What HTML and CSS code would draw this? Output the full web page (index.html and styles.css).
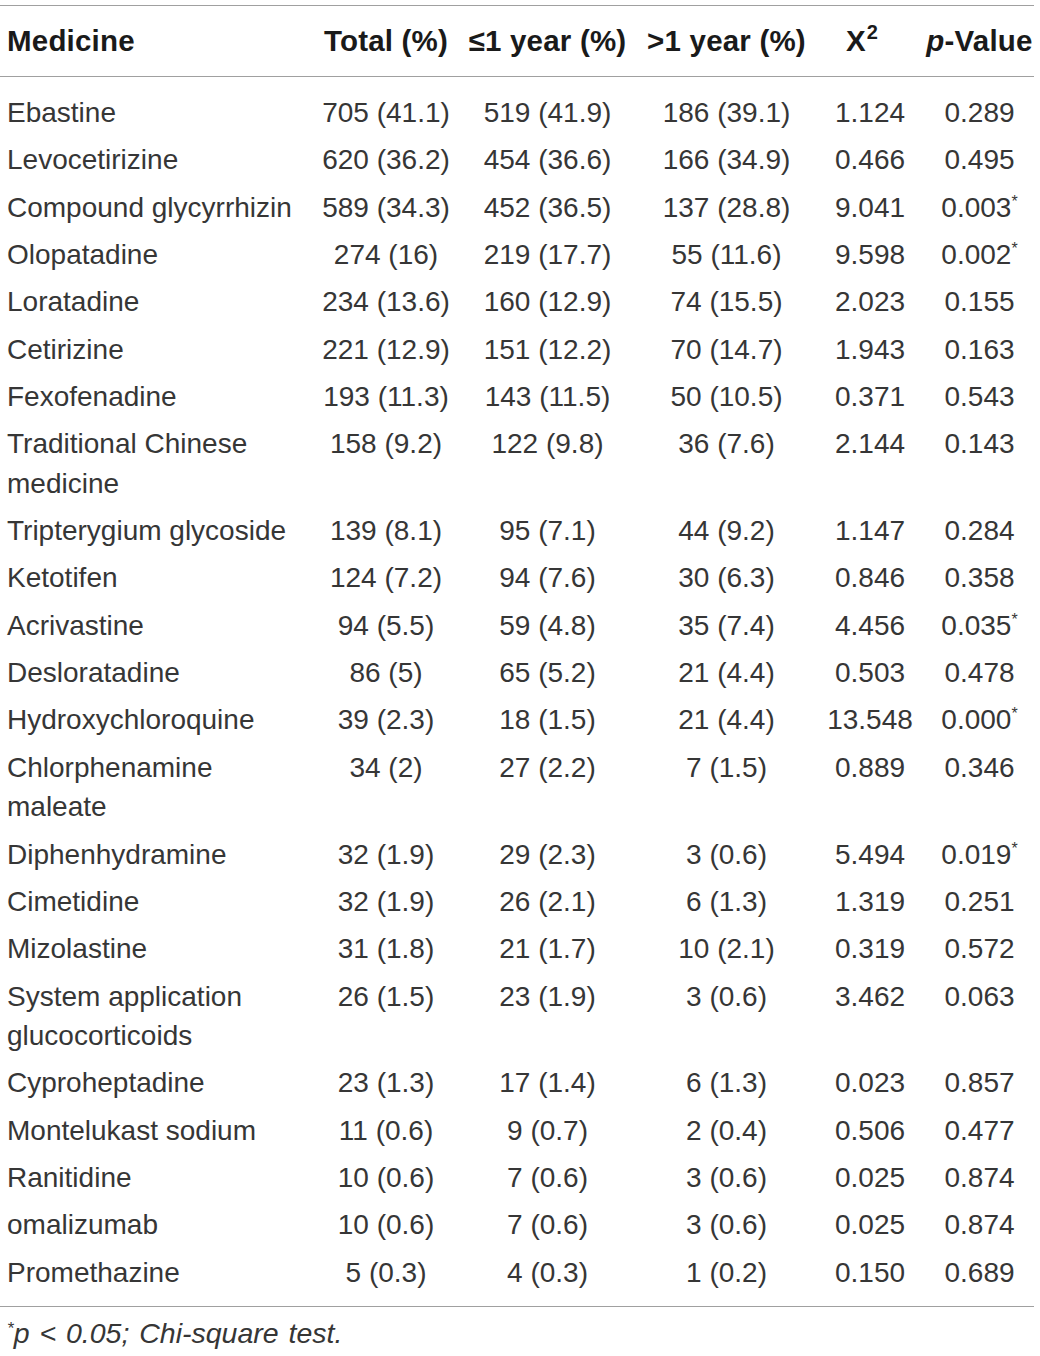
FILE: index.html
```html
<!DOCTYPE html>
<html lang="en">
<head>
<meta charset="utf-8">
<title>Medicine table</title>
<link rel="stylesheet" href="styles.css">
</head>
<body>
<div class="wrap">
<table class="data">
<colgroup>
<col class="c1"><col class="c2"><col class="c3"><col class="c4"><col class="c5"><col class="c6">
</colgroup>
<thead>
<tr><th class="name">Medicine</th><th>Total (%)</th><th>&le;1 year (%)</th><th>&gt;1 year (%)</th><th class="chi">X<sup>2</sup></th><th><i>p</i>-Value</th></tr>
</thead>
<tbody>
<tr class="first"><td class="name">Ebastine</td><td>705 (41.1)</td><td>519 (41.9)</td><td>186 (39.1)</td><td>1.124</td><td>0.289</td></tr>
<tr><td class="name">Levocetirizine</td><td>620 (36.2)</td><td>454 (36.6)</td><td>166 (34.9)</td><td>0.466</td><td>0.495</td></tr>
<tr><td class="name">Compound glycyrrhizin</td><td>589 (34.3)</td><td>452 (36.5)</td><td>137 (28.8)</td><td>9.041</td><td>0.003<sup>*</sup></td></tr>
<tr><td class="name">Olopatadine</td><td>274 (16)</td><td>219 (17.7)</td><td>55 (11.6)</td><td>9.598</td><td>0.002<sup>*</sup></td></tr>
<tr><td class="name">Loratadine</td><td>234 (13.6)</td><td>160 (12.9)</td><td>74 (15.5)</td><td>2.023</td><td>0.155</td></tr>
<tr><td class="name">Cetirizine</td><td>221 (12.9)</td><td>151 (12.2)</td><td>70 (14.7)</td><td>1.943</td><td>0.163</td></tr>
<tr><td class="name">Fexofenadine</td><td>193 (11.3)</td><td>143 (11.5)</td><td>50 (10.5)</td><td>0.371</td><td>0.543</td></tr>
<tr><td class="name">Traditional Chinese<br>medicine</td><td>158 (9.2)</td><td>122 (9.8)</td><td>36 (7.6)</td><td>2.144</td><td>0.143</td></tr>
<tr><td class="name">Tripterygium glycoside</td><td>139 (8.1)</td><td>95 (7.1)</td><td>44 (9.2)</td><td>1.147</td><td>0.284</td></tr>
<tr><td class="name">Ketotifen</td><td>124 (7.2)</td><td>94 (7.6)</td><td>30 (6.3)</td><td>0.846</td><td>0.358</td></tr>
<tr><td class="name">Acrivastine</td><td>94 (5.5)</td><td>59 (4.8)</td><td>35 (7.4)</td><td>4.456</td><td>0.035<sup>*</sup></td></tr>
<tr><td class="name">Desloratadine</td><td>86 (5)</td><td>65 (5.2)</td><td>21 (4.4)</td><td>0.503</td><td>0.478</td></tr>
<tr><td class="name">Hydroxychloroquine</td><td>39 (2.3)</td><td>18 (1.5)</td><td>21 (4.4)</td><td>13.548</td><td>0.000<sup>*</sup></td></tr>
<tr><td class="name">Chlorphenamine<br>maleate</td><td>34 (2)</td><td>27 (2.2)</td><td>7 (1.5)</td><td>0.889</td><td>0.346</td></tr>
<tr><td class="name">Diphenhydramine</td><td>32 (1.9)</td><td>29 (2.3)</td><td>3 (0.6)</td><td>5.494</td><td>0.019<sup>*</sup></td></tr>
<tr><td class="name">Cimetidine</td><td>32 (1.9)</td><td>26 (2.1)</td><td>6 (1.3)</td><td>1.319</td><td>0.251</td></tr>
<tr><td class="name">Mizolastine</td><td>31 (1.8)</td><td>21 (1.7)</td><td>10 (2.1)</td><td>0.319</td><td>0.572</td></tr>
<tr><td class="name">System application<br>glucocorticoids</td><td>26 (1.5)</td><td>23 (1.9)</td><td>3 (0.6)</td><td>3.462</td><td>0.063</td></tr>
<tr><td class="name">Cyproheptadine</td><td>23 (1.3)</td><td>17 (1.4)</td><td>6 (1.3)</td><td>0.023</td><td>0.857</td></tr>
<tr><td class="name">Montelukast sodium</td><td>11 (0.6)</td><td>9 (0.7)</td><td>2 (0.4)</td><td>0.506</td><td>0.477</td></tr>
<tr><td class="name">Ranitidine</td><td>10 (0.6)</td><td>7 (0.6)</td><td>3 (0.6)</td><td>0.025</td><td>0.874</td></tr>
<tr><td class="name">omalizumab</td><td>10 (0.6)</td><td>7 (0.6)</td><td>3 (0.6)</td><td>0.025</td><td>0.874</td></tr>
<tr class="last"><td class="name">Promethazine</td><td>5 (0.3)</td><td>4 (0.3)</td><td>1 (0.2)</td><td>0.150</td><td>0.689</td></tr>
</tbody>
</table>
<p class="note"><sup>*</sup>p &lt; 0.05; Chi-square test.</p>
</div>
</body>
</html>
```
FILE: styles.css
```css
html, body {
  margin: 0;
  padding: 0;
  background: #ffffff;
}
.wrap {
  padding-top: 5px;
  width: 1034px;
  font-family: "Liberation Sans", Arial, sans-serif;
  color: #363636;
}
.data {
  width: 1034px;
  border-collapse: collapse;
  table-layout: fixed;
  border-top: 1px solid #a0a0a0;
  border-bottom: 1px solid #a0a0a0;
}
.c1 { width: 315px; }
.c2 { width: 142px; }
.c3 { width: 181px; }
.c4 { width: 177px; }
.c5 { width: 110px; }
.c6 { width: 109px; }
.data th, .data td {
  padding: 0;
  text-align: center;
  white-space: nowrap;
  vertical-align: top;
}
.data thead th {
  font-size: 29.5px;
  letter-spacing: 0.2px;
  font-weight: bold;
  color: #1a1a1a;
  line-height: 40px;
  padding: 15px 0;
  border-bottom: 1px solid #a0a0a0;
}
.data thead th.chi {
  padding-right: 16px;
}
.data thead th.chi sup {
  font-size: 20px;
  vertical-align: 12px;
  margin-left: 1px;
}
.data td {
  font-size: 28px;
  line-height: 39.5px;
  padding: 4px 0 3.83px;
}
.data .name {
  text-align: left;
  padding-left: 7px;
}
.data tr.first td {
  padding-top: 16px;
}
.data tr.last td {
  padding-bottom: 14px;
}
.data sup {
  font-size: 17px;
  line-height: 0;
  vertical-align: 11px;
}
.data td sup {
  font-size: 16px;
  vertical-align: 10px;
}
.note {
  margin: 8px 0 0;
  padding-left: 7px;
  font-size: 28.5px;
  word-spacing: 2px;
  font-style: italic;
  line-height: 36px;
}
.note sup {
  font-size: 17px;
  line-height: 0;
  vertical-align: 9px;
}
```
